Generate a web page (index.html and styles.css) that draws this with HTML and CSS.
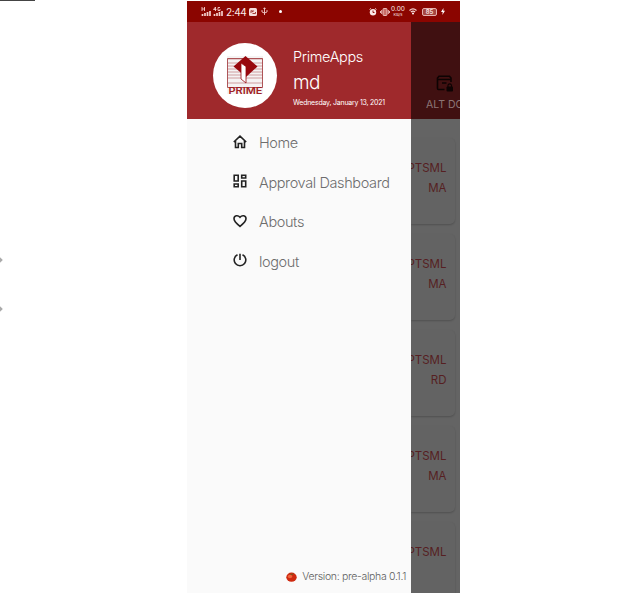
FILE: index.html
```
<!DOCTYPE html>
<html lang="en">
<head>
<meta charset="utf-8">
<title>PrimeApps</title>
<link rel="stylesheet" href="styles.css">
</head>
<body>
<i class="edge-line"></i><i class="handle handle-a"></i><i class="handle handle-b"></i>
<main class="phone">
  <header class="status">
    <svg class="signal" width="10" height="10" viewBox="0 0 10 10"><path d="M1 0v4M3.500 0v4M1 2h3" class="thin"/><path d="M1.500 9V7M4 9V6M6.500 9V5M9 9V4" class="bar"/></svg>
    <svg class="signal second" width="10" height="10" viewBox="0 0 10 10"><path d="M2.500 4V0L0.500 2.500H3.500M7 .5H5V3.500H7V2" class="thin"/><path d="M1.500 9V7M4 9V6M6.500 9V5M9 9V4" class="bar"/></svg>
    <span class="clock">2:44</span>
    <svg class="note" width="8" height="8" viewBox="0 0 8 8"><rect width="8" height="8" rx="1.500" fill="#f5dcda"/><path d="M2 5V2.500L4 4V2M3.500 5.500H6.500V4" fill="none" stroke="#9a2a24" stroke-width=".9"/></svg>
    <svg class="usb" width="7" height="9" viewBox="0 0 7 9"><path d="M3.500 8V1M1 3V5L3.500 6L6 5V3M2.500 2L3.500 .7L4.500 2" class="thin"/></svg>
    <i class="dot"></i>
    <div class="status-right">
      <svg width="8" height="8" viewBox="0 0 8 8"><circle cx="4" cy="4.300" r="3.200" fill="#fbe9e7"/><path d="M4 2.500V4.500H5.500" fill="none" stroke="#8b0500" stroke-width=".9"/><path d="M.5 1.500L2 .3M6 .3L7.500 1.500" class="thin"/></svg>
      <svg class="vibrate" width="10" height="8" viewBox="0 0 10 8"><rect x="3" y=".5" width="4" height="7" rx=".8" fill="#c96f69" stroke="#f0c8c4" stroke-width=".9"/><path d="M1.700 2V6M8.300 2V6M.5 3V5M9.500 3V5" class="thin"/></svg>
      <div class="speed"><b>0.00</b><small>KB/s</small></div>
      <svg class="wifi" width="8" height="7" viewBox="0 0 8 7"><path d="M.5 2.500Q4-.8 7.500 2.500M1.900 4Q4 2.200 6.100 4" fill="none" stroke="#f5d6d3" stroke-width="1.100"/><circle cx="4" cy="5.500" r="1" fill="#fff"/></svg>
      <span class="battery">85</span>
      <svg class="bolt" width="4" height="7" viewBox="0 0 4 7"><path d="M2.500 0L0 4H1.700L1.300 7L4 2.800H2.300Z" fill="#fff"/></svg>
    </div>
  </header>
  <div class="content">
    <aside class="drawer">
      <section class="profile">
        <div class="avatar">
          <svg width="64" height="64" viewBox="0 0 64 64">
            <rect x="14" y="13" width="36" height="38" fill="#f5f3f3"/>
            <path d="M14.500 16H50M14.500 20H50M14.500 23H50M14.500 26H50M14.500 29H50M14.500 32H50M14.500 35H50M14.500 40H50" stroke="#c5898a" stroke-width=".8"/>
            <path d="M14.500 15.500H49.500V44.500H14.500Z" fill="none" stroke="#a74548" stroke-width=".9"/>
            <path d="M32.500 13L44.500 23.500L33 34L20.500 23.500Z" fill="#98080d"/>
            <path d="M28 20L33 23.500V40L28 36Z" fill="#fff" stroke="#98080d" stroke-width=".8"/>
            <text x="15.500" y="51" textLength="34" lengthAdjust="spacingAndGlyphs" class="brand">PRIME</text>
          </svg>
        </div>
        <div class="identity">
          <div class="app-name">PrimeApps</div>
          <div class="user">md</div>
          <div class="date">Wednesday, January 13, 2021</div>
        </div>
      </section>
      <nav class="menu">
        <a><svg viewBox="0 0 14 14"><path d="M.8 7L7 1.200L13.200 7M2.500 5.500V12.500H5.300V8.500H8.700V12.500H11.500V5.500"/></svg><span>Home</span></a>
        <a><svg viewBox="0 0 14 14"><path d="M1.200 1.200H5.200V7H1.200ZM8.700 1.200H12.700V4H8.700ZM1.200 10H5.200V12.700H1.200ZM8.700 7H12.700V12.700H8.700Z"/></svg><span>Approval Dashboard</span></a>
        <a><svg viewBox="0 0 14 14"><path d="M7 12.400C3.500 9.500 1 7.400 1 4.700C1 1.300 5 .8 7 3.300C9 .8 13 1.300 13 4.700C13 7.400 10.500 9.500 7 12.400Z"/></svg><span>Abouts</span></a>
        <a><svg viewBox="0 0 14 14"><path d="M4.500 1.700A5.800 5.800 0 1 0 9.500 1.700M7 .8V7"/></svg><span>logout</span></a>
      </nav>
      <footer class="version">
        <svg width="11" height="10" viewBox="0 0 11 10"><ellipse cx="5.500" cy="5.200" rx="5.200" ry="4.600" fill="#cf2a10"/><ellipse cx="4" cy="4.500" rx="2.200" ry="1.700" fill="#f0653c"/><path d="M3 1.500L5.500 2L8 1.300L6 3Z" fill="#546b20"/></svg>
        <span>Version: pre-alpha 0.1.1</span>
      </footer>
    </aside>
    <section class="behind">
      <div class="alt">
        <svg width="18" height="18" viewBox="0 0 18 18"><path d="M15 7V3L13.500 1.300H3L1.500 3V13.500Q1.500 14.500 2.500 14.500H8.500M1.500 4.500H15M6 8H10.500" fill="none" stroke="#0d0303" stroke-width="1.600"/><rect x="10.500" y="11.500" width="6.500" height="5" rx="1" fill="#0d0303"/><path d="M12 12V10Q13.700 7.700 15.500 10V12" fill="none" stroke="#0d0303" stroke-width="1.100"/></svg>
        <span>ALT DO</span>
      </div>
      <div class="cards">
        <article><p>PTSML</p><p>MA</p></article>
        <article><p>PTSML</p><p>MA</p></article>
        <article><p>PTSML</p><p>RD</p></article>
        <article><p>PTSML</p><p>MA</p></article>
        <article><p>PTSML</p></article>
      </div>
    </section>
  </div>
</main>
</body>
</html>
```
FILE: styles.css
```
* { box-sizing: border-box; }
body { margin: 0; background: #fff; font-family: Inter, "Liberation Sans", sans-serif; height: 594px; overflow: hidden; }
svg { display: block; flex: none; }
p { margin: 0; }
.edge-line { position: absolute; left: 0; top: 0; width: 35px; height: 1px; background: #444; }
.handle { position: absolute; left: -2px; width: 4px; height: 4px; background: #aaa; transform: rotate(45deg); }
.handle-a { top: 258px; }
.handle-b { top: 307px; }
.phone { margin: 1px 0 0 187px; width: 273px; height: 592px; display: flex; flex-direction: column; overflow: hidden; }
.status { height: 21px; flex: none; background: #8b0500; display: flex; align-items: center; padding-left: 14px; color: #fbe9e7; }
.thin { fill: none; stroke: #f3cfcc; stroke-width: .9; }
.bar { fill: none; stroke: #f3cfcc; stroke-width: 1.700; }
.second { margin-left: 2px; }
.clock { font-size: 10px; width: 20px; margin-left: 3px; white-space: nowrap; letter-spacing: -.4px; }
.note { margin-left: 3px; }
.usb { margin-left: 4px; }
.dot { width: 3px; height: 3px; border-radius: 50%; background: #fff; margin-left: 11px; }
.status-right { margin-left: auto; padding-right: 15px; display: flex; align-items: center; }
.vibrate { margin-left: 3px; }
.speed { width: 14px; margin-left: 1px; display: flex; flex-direction: column; align-items: center; gap: 1px; }
.speed b { font: 400 6.500px/6px Inter, sans-serif; }
.speed small { font: 400 4px/4px Inter, sans-serif; }
.wifi { margin-left: 4px; }
.battery { width: 15px; height: 8px; margin-left: 5px; border: 1px solid #e5b2ae; border-radius: 2px; font: 600 6px/6px Inter, sans-serif; text-align: center; background: #a64640; }
.bolt { margin-left: 4px; }
.content { flex: 1; display: flex; min-height: 0; }
.drawer { width: 224px; flex: none; display: flex; flex-direction: column; background: #fafafa; }
.profile { height: 97px; background: #9f292c; display: flex; color: #fff; padding: 21px 0 0 26px; }
.avatar { width: 64px; height: 65px; border-radius: 50%; background: #fff; overflow: hidden; flex: none; }
.brand { font: 600 9px Inter, sans-serif; fill: #a02024; }
.identity { margin-left: 16px; white-space: nowrap; font-weight: 300; }
.app-name { font-size: 14.500px; line-height: 18px; margin-top: 5px; letter-spacing: -.35px; }
.user { font-size: 19px; line-height: 24px; margin-top: 5px; letter-spacing: -.6px; }
.date { font-size: 7px; line-height: 10px; margin-top: 3px; font-weight: 400; letter-spacing: -.23px; }
.menu { padding: 4px 0 0 46px; }
.menu a { display: flex; align-items: center; height: 39.500px; gap: 12px; color: #6d6d6d; font-size: 14.500px; font-weight: 300; white-space: nowrap; letter-spacing: -.38px; }
.menu svg { width: 14px; height: 14px; fill: none; stroke: #222; stroke-width: 1.600; position: relative; top: -1px; }
.version { margin-top: auto; height: 33px; display: flex; align-items: center; justify-content: flex-end; padding-right: 5px; gap: 5px; font-size: 10.500px; font-weight: 300; letter-spacing: -.32px; color: #606060; white-space: nowrap; }
.behind { flex: 1; min-width: 0; overflow: hidden; background: #646464; }
.alt { height: 97px; background: #401011; color: #8c7676; padding: 53px 0 0 15px; font-size: 10.500px; line-height: 14px; white-space: nowrap; }
.alt svg { margin-left: 10px; }
.alt span { display: block; margin-top: 5px; }
.cards { display: flex; flex-direction: column; gap: 10px; padding-top: 19px; }
article { height: 86px; margin-right: 5px; flex: none; border-radius: 0 5px 5px 0; background: #636363; box-shadow: 0 1px 2px rgba(0,0,0,.2); padding: 21px 8.500px 0 0; display: flex; flex-direction: column; align-items: flex-end; color: #561f22; font-size: 11.500px; line-height: 19.500px; }
```
